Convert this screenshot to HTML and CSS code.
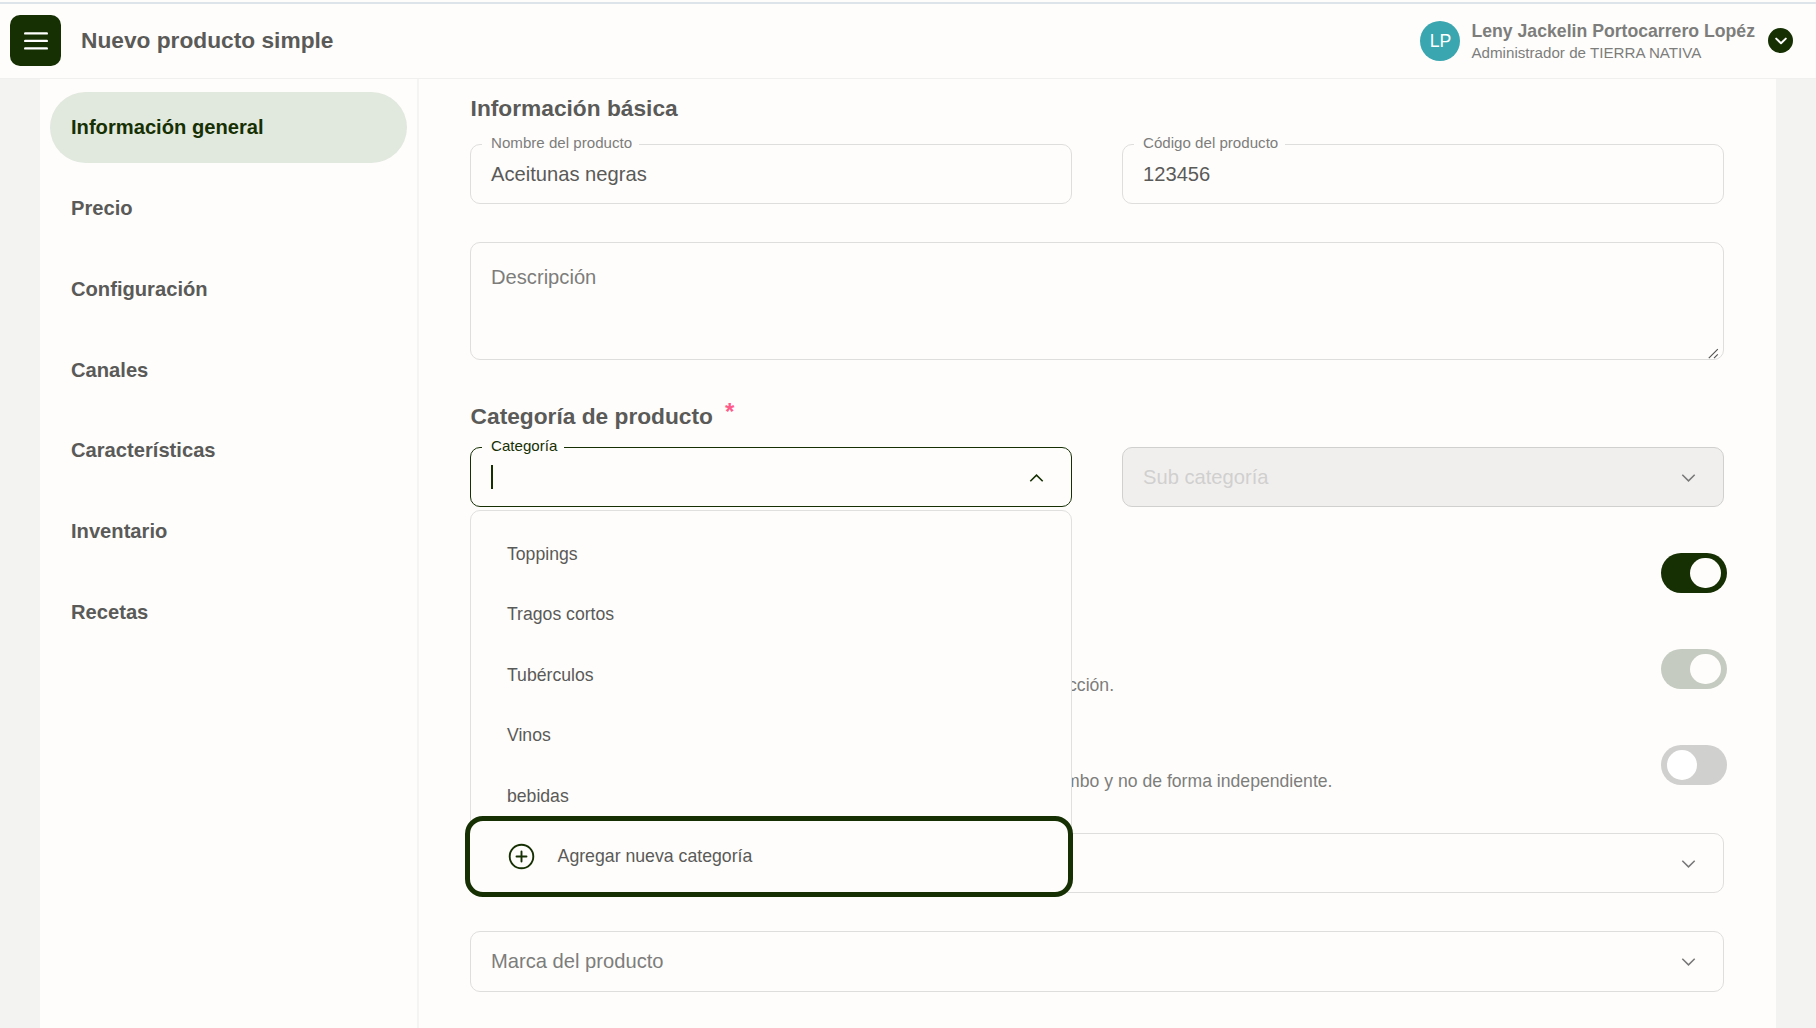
FILE: index.html
```html
<!DOCTYPE html>
<html lang="es">
<head>
<meta charset="utf-8">
<title>Nuevo producto simple</title>
<link rel="stylesheet" href="styles.css">
</head>
<body>
<header class="topbar">
  <button class="menu-btn" aria-label="Menú">
    <svg width="24" height="20" viewBox="0 0 24 20"><path d="M1.2 2.4h21.6M1.2 9.9h21.6M1.2 17.4h21.6" stroke="#fff" stroke-width="2.4" stroke-linecap="round"/></svg>
  </button>
  <h1 class="page-title">Nuevo producto simple</h1>
  <div class="user">
    <div class="avatar">LP</div>
    <div class="user-text">
      <div class="user-name">Leny Jackelin Portocarrero Lopéz</div>
      <div class="user-role">Administrador de TIERRA NATIVA</div>
    </div>
    <div class="user-toggle">
      <svg width="14" height="10" viewBox="0 0 14 10"><path d="M2.2 2.6 7 7.2l4.8-4.6" fill="none" stroke="#fff" stroke-width="2" stroke-linecap="round" stroke-linejoin="round"/></svg>
    </div>
  </div>
</header>
<div class="panel">
  <nav class="sidebar">
    <a class="nav-item active">Información general</a>
    <a class="nav-item">Precio</a>
    <a class="nav-item">Configuración</a>
    <a class="nav-item">Canales</a>
    <a class="nav-item">Características</a>
    <a class="nav-item">Inventario</a>
    <a class="nav-item">Recetas</a>
  </nav>
  <main class="content">
    <h2 class="heading">Información básica</h2>
    <div class="row row-basic">
      <div class="field"><label class="float-label">Nombre del producto</label><span>Aceitunas negras</span></div>
      <div class="field"><label class="float-label">Código del producto</label><span>123456</span></div>
    </div>
    <div class="textarea">
      <span>Descripción</span>
      <svg class="grip" width="11" height="11" viewBox="0 0 11 11"><path d="M.8 10.2 9.8 1.2M6 10.2l3.8-3.8" stroke="#555" stroke-width="1.2"/></svg>
    </div>
    <h2 class="heading heading-cat">Categoría de producto<span class="required">*</span></h2>
    <div class="row row-cat">
      <div class="field focused">
        <label class="float-label">Categoría</label>
        <span class="caret"></span>
        <svg class="chevron" width="15" height="10" viewBox="0 0 15 10"><path d="M1.3 8.3 7.5 2.1l6.2 6.2" fill="none" stroke="#163004" stroke-width="1.6"/></svg>
        <div class="dropdown">
          <ul class="options">
            <li>Toppings</li>
            <li>Tragos cortos</li>
            <li>Tubérculos</li>
            <li>Vinos</li>
            <li>bebidas</li>
          </ul>
          <div class="add-option">
            <svg width="27" height="27" viewBox="0 0 27 27"><g fill="none" stroke="#163004" stroke-width="1.9" stroke-linecap="round"><circle cx="13.5" cy="13.5" r="11.8"/><path d="M8.5 13.5h10M13.5 8.5v10"/></g></svg>
            <span class="add-text">Agregar nueva categoría</span>
          </div>
        </div>
      </div>
      <div class="field disabled">
        <span>Sub categoría</span>
        <svg class="chevron" width="15" height="10" viewBox="0 0 15 10"><path d="M1.3 1.7 7.5 7.9l6.2-6.2" fill="none" stroke="#777" stroke-width="1.5"/></svg>
      </div>
    </div>
    <div class="switches">
      <div class="switch-row"><p class="hint"></p><div class="switch on"><i></i></div></div>
      <div class="switch-row"><p class="hint hint-short">cción.</p><div class="switch on muted"><i></i></div></div>
      <div class="switch-row"><p class="hint hint-long">mbo y no de forma independiente.</p><div class="switch"><i></i></div></div>
    </div>
    <div class="selects">
      <div class="field placeholder">
        <span></span>
        <svg class="chevron" width="15" height="10" viewBox="0 0 15 10"><path d="M1.3 1.7 7.5 7.9l6.2-6.2" fill="none" stroke="#777" stroke-width="1.5"/></svg>
      </div>
      <div class="field placeholder">
        <span>Marca del producto</span>
        <svg class="chevron" width="15" height="10" viewBox="0 0 15 10"><path d="M1.3 1.7 7.5 7.9l6.2-6.2" fill="none" stroke="#777" stroke-width="1.5"/></svg>
      </div>
    </div>
  </main>
</div>
</body>
</html>
```
FILE: styles.css
```css
* { box-sizing: border-box; }
body {
  margin: 0;
  height: 1028px;
  overflow: hidden;
  display: flex;
  flex-direction: column;
  background: #f3f3f2;
  color: #5a5a58;
  font-family: "Liberation Sans", Arial, sans-serif;
  font-size: 20.16px;
  border-top: 2px solid #fefdfb;
}
h1, h2, p, ul { margin: 0; padding: 0; }
.topbar {
  flex: none;
  height: 77px;
  display: flex;
  align-items: center;
  padding: 0 23px 1px 10px;
  background: #fefdfb;
  border-top: 2px solid #dde5eb;
  border-bottom: 1px solid #f0f0ef;
}
.menu-btn {
  width: 51px;
  height: 51px;
  padding: 0;
  border: 0;
  border-radius: 10px;
  background: #163004;
  display: flex;
  align-items: center;
  justify-content: center;
}
.page-title { margin-left: 20px; padding-bottom: 2px; font-size: 22.72px; line-height: 30px; }
.user { margin-left: auto; display: flex; align-items: center; color: #7d7d7b; }
.avatar {
  width: 40px;
  height: 40px;
  border-radius: 50%;
  background: #3aa6b0;
  color: #fff;
  font-size: 17.64px;
  line-height: 40px;
  text-align: center;
}
.user-text { margin-left: 11px; }
.user-name { padding-top: 1px; font-size: 17.67px; font-weight: bold; line-height: 23px; }
.user-role { font-size: 15.17px; line-height: 20px; }
.user-toggle {
  width: 25px;
  height: 25px;
  margin-left: 13px;
  border-radius: 50%;
  background: #163004;
  display: flex;
  align-items: center;
  justify-content: center;
}
.panel { flex: 1; margin: 0 40px; display: flex; background: #fefdfb; }
.sidebar {
  width: 379px;
  padding: 13px 10px;
  border-right: 2px solid #f4f4f3;
  display: flex;
  flex-direction: column;
  gap: 10.3px;
}
.nav-item {
  height: 70.56px;
  padding-left: 21px;
  border-radius: 36px;
  font-weight: bold;
  line-height: 70.56px;
}
.nav-item.active { background: #e1e8de; color: #163004; }
.content { flex: 1; padding: 14px 52px 0 51px; }
.heading { padding-left: .6px; font-size: 22.72px; line-height: 30px; }
.heading-cat { margin-top: 41px; }
.required {
  display: inline-block;
  margin-left: 12px;
  color: #ff5b8a;
  font-size: 24px;
  line-height: 20px;
  vertical-align: 4px;
}
.row { display: grid; grid-template-columns: 1fr 1fr; gap: 50px; }
.row-basic { margin-top: 21px; }
.row-cat { margin-top: 15.5px; }
.field {
  position: relative;
  height: 60.4px;
  padding: 0 27px 0 20px;
  border: 1px solid #dededd;
  border-radius: 10px;
  display: flex;
  align-items: center;
}
.float-label {
  position: absolute;
  top: -12px;
  left: 11px;
  padding: 0 7px 0 9px;
  background: #fefdfb;
  color: #7d7d7b;
  font-size: 15.12px;
  line-height: 20px;
}
.chevron { margin: 2px 0 0 auto; }
.focused { border-color: #163004; }
.focused .float-label { color: #163004; }
.caret { width: 1.5px; height: 24px; background: #163004; }
.disabled { background: #f0efee; border-color: #d0d0cf; color: #d0d0cf; }
.placeholder { color: #7d7d7b; }
.textarea {
  position: relative;
  height: 118.5px;
  margin-top: 37.6px;
  padding: 21px 20px;
  border: 1px solid #dededd;
  border-radius: 10px;
  color: #7d7d7b;
  line-height: 26px;
}
.grip { position: absolute; right: 4px; bottom: 0; }
.dropdown {
  position: absolute;
  z-index: 2;
  top: 62px;
  left: -1px;
  right: -1px;
  border: 1px solid #e0e0df;
  border-radius: 10px;
  background: #fefdfb;
  font-size: 17.64px;
}
.options { height: 305px; padding: 13px 36px 0; overflow: hidden; list-style: none; }
.options li { height: 60.48px; line-height: 60.48px; }
.add-option {
  height: 81px;
  margin: 0 -2px -4px -6px;
  padding-left: 38px;
  border: 5px solid #163004;
  border-radius: 18px;
  background: #fefdfb;
  display: flex;
  align-items: center;
  gap: 22.6px;
}
.add-text { padding-top: 1px; font-size: 17.7px; }
.switches { margin: 17.5px -2.5px 20px 0; }
.switch-row { height: 96px; display: flex; justify-content: space-between; align-items: center; }
.hint { align-self: flex-start; padding-top: 54px; color: #7d7d7b; font-size: 17.64px; line-height: 20px; white-space: nowrap; }
.hint-short { margin-left: 598px; }
.hint-long { margin-left: 595px; }
.switch { width: 65.5px; height: 40.3px; padding: 5px 6px; border-radius: 20.2px; background: #d0d0cf; display: flex; }
.switch i { width: 30.2px; height: 30.2px; border-radius: 50%; background: #fff; }
.switch.on { justify-content: flex-end; background: #163004; }
.switch.on i { background: #fefdfb; }
.switch.on.muted { background: #c5cbc1; }
.selects { display: grid; gap: 38px; }
```
